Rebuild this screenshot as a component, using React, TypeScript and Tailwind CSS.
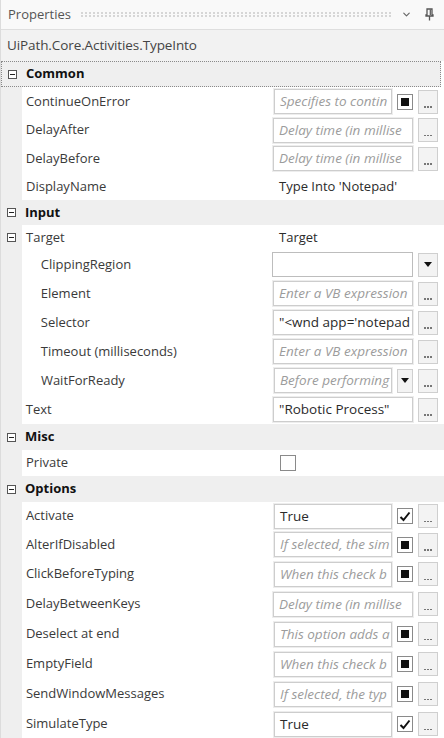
import React from 'react';
import { ChevronDown } from 'lucide-react';

type Check = 'ind' | 'on' | 'off';

// small [-] box used on category and nested rows
function Expander() {
  return (
    <span className="w-[9px] h-[9px] border border-[#555] bg-white flex items-center justify-center">
      <span className="w-[5px] h-px bg-[#222]" />
    </span>
  );
}

function Ellipsis() {
  return (
    <div className="w-[20px] h-[24px] border border-[#cfcfcf] bg-[#f3f3f3] flex items-end justify-center gap-[1px] pb-[5px]">
      <span className="w-[2px] h-[1.5px] bg-[#777]" />
      <span className="w-[2px] h-[1.5px] bg-[#777]" />
      <span className="w-[2px] h-[1.5px] bg-[#777]" />
    </div>
  );
}

function DropBtn({ w }: { w: string }) {
  return (
    <div className={`${w} h-[24px] border border-[#cfcfcf] bg-[#f3f3f3] flex items-center justify-center`}>
      <svg width="8" height="5" viewBox="0 0 8 5">
        <path d="M0 0 L8 0 L4 5 Z" fill="#111" />
      </svg>
    </div>
  );
}

function CheckBox({ state }: { state: Check }) {
  return (
    <div className="w-[16px] h-[16px] border border-[#8a8a8a] bg-white flex items-center justify-center">
      {state === 'ind' && <span className="w-[8px] h-[8px] bg-[#111]" />}
      {state === 'on' && (
        <svg width="12" height="11" viewBox="0 0 12 11">
          <path d="M1.5 6 L4.5 9 L10.5 1.5" stroke="#111" strokeWidth="2" fill="none" />
        </svg>
      )}
    </div>
  );
}

function Field({ text, ph, w }: { text: string; ph?: boolean; w: string }) {
  return (
    <div
      className={`${w} h-[25px] border border-[#cdcdcd] shadow-[0_0_0_1px_#ededed] bg-white flex items-center pl-[5px] overflow-hidden whitespace-nowrap text-[13.5px] ${
        ph ? 'italic text-[#9c9c9c]' : 'text-[#2b2b2b]'
      }`}
    >
      {text}
    </div>
  );
}

type Prop = {
  label: string;
  h: string;
  indent?: boolean;
  expand?: boolean;
  value?: React.ReactNode;
};

function Row({ label, h, indent, expand, value }: Prop) {
  return (
    <div className={`flex ${h}`}>
      <div className="w-[21px] bg-[#efefef] flex items-center pl-[6px]">{expand && <Expander />}</div>
      <div className={`w-[254px] flex items-center text-[#3a3a3a] ${indent ? 'pl-[19px]' : 'pl-[4px]'}`}>
        {label}
      </div>
      <div className="flex-1 flex items-center gap-[5px] pr-[6px]">{value}</div>
    </div>
  );
}

function Category({ label, h }: { label: string; h: string }) {
  return (
    <div className={`flex items-center ${h} bg-[#efefef] pl-[6px] gap-[9px]`}>
      <Expander />
      <span className="font-bold text-[#111]">{label}</span>
    </div>
  );
}

// text box + optional checkbox + "..." button
function Box({ text, ph, check }: { text: string; ph?: boolean; check?: Check }) {
  return (
    <>
      <Field text={text} ph={ph} w={check ? 'w-[118px]' : 'w-[140px]'} />
      {check && <CheckBox state={check} />}
      <Ellipsis />
    </>
  );
}

export default function App() {
  return (
    <div
      className="w-[444px] h-[738px] overflow-hidden bg-white text-[13px] border-l border-[#dcdcdc]"
      style={{ fontFamily: '"Open Sans", "Noto Sans", sans-serif' }}
    >
      {/* title bar */}
      <div className="h-[30px] flex items-center pl-[7px] pr-[10px] bg-[#f9f9f9] border-b border-[#dedede]">
        <span className="text-[#555]">Properties</span>
        <div className="flex-1 mx-[10px] h-[5px] border-y-2 border-dotted border-[#d6d6d6]" />
        <ChevronDown size={11} strokeWidth={2.5} className="text-[#666]" />
        <svg width="9" height="13" viewBox="0 0 9 13" className="ml-[13px]">
          <path d="M2 1 H7 V7 H8 V8 H1 V7 H2 Z" fill="none" stroke="#555" strokeWidth="1.3" />
          <path d="M4.5 8 V12.5" stroke="#555" strokeWidth="1.3" />
          <path d="M5.3 1.5 V7" stroke="#555" strokeWidth="1.2" />
        </svg>
      </div>

      <div className="h-[31px] flex items-center pl-[6px] bg-[#f2f2f2] text-[#444] text-[13.5px] tracking-[-0.1px]">
        UiPath.Core.Activities.TypeInto
      </div>

      <div className="h-[26px] flex items-center bg-[#efefef] pl-[6px] gap-[9px] border border-dotted border-[#8a8a8a] mr-[3px]">
        <Expander />
        <span className="font-bold text-[#111]">Common</span>
      </div>
      <Row label="ContinueOnError" h="h-[29px]" value={<Box text="Specifies to contin" ph check="ind" />} />
      <Row label="DelayAfter" h="h-[28px]" value={<Box text="Delay time (in millise" ph />} />
      <Row label="DelayBefore" h="h-[29px]" value={<Box text="Delay time (in millise" ph />} />
      <Row
        label="DisplayName"
        h="h-[27px]"
        value={<span className="pl-[3px] text-[#2b2b2b]">Type Into 'Notepad'</span>}
      />

      <Category label="Input" h="h-[25px]" />
      <Row label="Target" h="h-[25px]" expand value={<span className="pl-[3px] text-[#2b2b2b]">Target</span>} />
      <Row
        label="ClippingRegion"
        h="h-[29px]"
        indent
        value={
          <>
            <div className="w-[141px] h-[25px] border border-[#bdbdbd] bg-white" />
            <DropBtn w="w-[20px]" />
          </>
        }
      />
      <Row label="Element" h="h-[29px]" indent value={<Box text="Enter a VB expression" ph />} />
      <Row label="Selector" h="h-[29px]" indent value={<Box text={'"<wnd app=\'notepad'} />} />
      <Row label="Timeout (milliseconds)" h="h-[29px]" indent value={<Box text="Enter a VB expression" ph />} />
      <Row
        label="WaitForReady"
        h="h-[29px]"
        indent
        value={
          <>
            <Field text="Before performing" ph w="w-[118px]" />
            <DropBtn w="w-[16px]" />
            <Ellipsis />
          </>
        }
      />
      <Row label="Text" h="h-[29px]" value={<Box text={'"Robotic Process"'} />} />

      <Category label="Misc" h="h-[26px]" />
      <Row
        label="Private"
        h="h-[26px]"
        value={
          <div className="pl-[4px]">
            <CheckBox state="off" />
          </div>
        }
      />

      <Category label="Options" h="h-[26px]" />
      <Row label="Activate" h="h-[28px]" value={<Box text="True" check="on" />} />
      <Row label="AlterIfDisabled" h="h-[29px]" value={<Box text="If selected, the sim" ph check="ind" />} />
      <Row label="ClickBeforeTyping" h="h-[30px]" value={<Box text="When this check b" ph check="ind" />} />
      <Row label="DelayBetweenKeys" h="h-[30px]" value={<Box text="Delay time (in millise" ph />} />
      <Row label="Deselect at end" h="h-[30px]" value={<Box text="This option adds a" ph check="ind" />} />
      <Row label="EmptyField" h="h-[30px]" value={<Box text="When this check b" ph check="ind" />} />
      <Row label="SendWindowMessages" h="h-[30px]" value={<Box text="If selected, the typ" ph check="ind" />} />
      <Row label="SimulateType" h="h-[30px]" value={<Box text="True" check="on" />} />
    </div>
  );
}
